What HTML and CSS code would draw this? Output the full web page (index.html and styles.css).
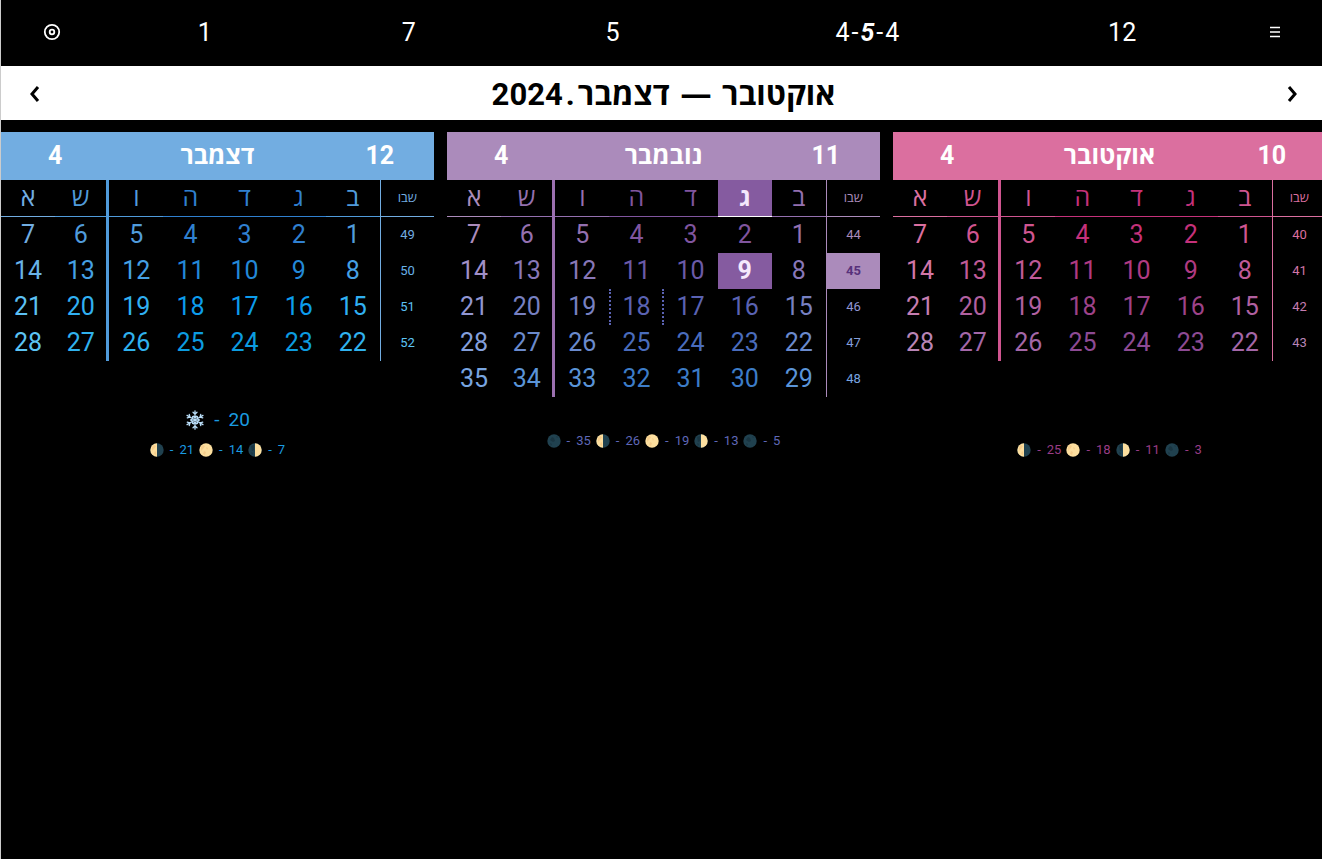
FILE: index.html
```
<!DOCTYPE html>
<html lang="he">
<head>
<meta charset="utf-8">
<title>אוקטובר — דצמבר.2024</title>
<link rel="stylesheet" href="styles.css">
</head>
<body>
<svg class="defs" aria-hidden="true">
  <symbol id="dark" viewBox="0 0 14 14"><circle cx="7" cy="7" r="6.7" fill="#20414f"/><path d="M5 3l2 1 1 3-2 1-3-2zM3 9l2 1-1 2zM9 2l2 1-1 1z" fill="#1a3541"/></symbol>
  <symbol id="full" viewBox="0 0 14 14"><circle cx="7" cy="7" r="6.7" fill="#fddf9f"/><path d="M2 4l2-2 2 1-2 3-2 2zM7 4l2 1-1 2zM5 8l2 1-1 3-2-1z" fill="#f6cd8c"/></symbol>
  <symbol id="first" viewBox="0 0 14 14"><circle cx="7" cy="7" r="6.7" fill="#20414f"/><path d="M3 3l3-1v5l-2 1zM3 9l2 1-1 2z" fill="#1a3541"/><path d="M7 .3a6.7 6.7 0 0 1 0 13.400z" fill="#fddf9f"/></symbol>
  <symbol id="last" viewBox="0 0 14 14"><circle cx="7" cy="7" r="6.7" fill="#20414f"/><path d="M7 .3a6.700 6.700 0 0 0 0 13.400z" fill="#fddf9f"/><path d="M2 4l2-2 2 1-2 3-2 2zM5 8l1 1v3l-2-1z" fill="#f6cd8c"/></symbol>
  <symbol id="snow" viewBox="0 0 20 20"><g fill="none" stroke="#b9ddf8" stroke-width="1.300" stroke-linecap="round"><path id="arm" d="M10 10V.8M8 2.200L10 4.200l2-2M8.300 6.200L10 7.800l1.700-1.600"/><use href="#arm" transform="rotate(60 10 10)"/><use href="#arm" transform="rotate(120 10 10)"/><use href="#arm" transform="rotate(180 10 10)"/><use href="#arm" transform="rotate(240 10 10)"/><use href="#arm" transform="rotate(300 10 10)"/></g></symbol>
</svg>
<div class="page">
  <nav class="menu">
    <button aria-label="היום"><svg class="target" viewBox="0 0 18 18"><circle cx="9" cy="9" r="7.200"/><circle cx="9" cy="9" r="2.300"/></svg></button>
    <button>1</button>
    <button>7</button>
    <button>5</button>
    <button><span class="pattern"><span>4</span><span>-</span><b><i>5</i></b><span>-</span><span>4</span></span></button>
    <button>12</button>
    <button aria-label="תפריט"><svg class="bars" viewBox="0 0 12 12"><path d="M1 1.500h10M1 6h10M1 10.500h10"/></svg></button>
  </nav>
  <header class="period">
    <button aria-label="הבא"><svg class="arrow" viewBox="0 0 10 16"><path d="M8 1L2 8l6 7"/></svg></button>
    <h1 dir="rtl">אוקטובר <span class="dash">—</span> דצמבר<span class="dot">.</span>2024</h1>
    <button aria-label="הקודם"><svg class="arrow" viewBox="0 0 10 16"><path d="M2 1l6 7-6 7"/></svg></button>
  </header>
  <main class="months" dir="rtl" id="months"></main>
</div>
<script src="calendar.js"></script>
</body>
</html>
```
FILE: styles.css
```
* { box-sizing: border-box; }
body {
  margin: 0;
  min-height: 100vh;
  background: #000;
  color: #fff;
  border-left: 1px solid #ccc;
  font-family: Roboto, "Open Sans", sans-serif;
  font-size: 25px;
  overflow: hidden;
}
.defs { position: absolute; width: 0; height: 0; }
.page { width: calc(100% + 4px); }
button {
  background: none;
  border: 0;
  padding: 0;
  color: inherit;
  font: inherit;
  cursor: pointer;
}
.menu {
  display: grid;
  grid-template-columns: 1fr 2fr 2fr 2fr 3fr 2fr 1fr;
  height: 66px;
  padding-bottom: 2px;
}
.menu svg, .arrow { display: block; margin: 0 auto; fill: none; stroke: currentColor; }
.pattern { display: flex; justify-content: center; gap: 2px; }
.target { width: 18px; height: 18px; stroke-width: 1.8; }
.bars { width: 12px; height: 12px; stroke-width: 1.7; }
.period {
  display: grid;
  grid-template-columns: 68px 1fr 68px;
  align-items: center;
  height: 54px;
  background: #fff;
  color: #000;
}
.period h1 { margin: 0; text-align: center; font-size: 31px; font-weight: 700; line-height: 54px; }
.dash { margin: 0 3px; font-family: "Open Sans", sans-serif; }
.dot { margin: 0 3px; }
.arrow { width: 10px; height: 16px; stroke-width: 3; }
.months {
  display: grid;
  grid-template-columns: repeat(3, 1fr);
  gap: 13px;
  padding-top: 12px;
}
.m10 { --main: #db6f9f; --mid: #d05590; }
.m11 { --main: #ab8bbb; --mid: #9b70b0; }
.m12 { --main: #72ade1; --mid: #509bdb; }
.month h2 {
  display: grid;
  grid-template-columns: 1fr 2fr 1fr;
  margin: 0;
  height: 48px;
  line-height: 48px;
  background: var(--main);
  color: #fff;
  text-align: center;
  font-size: 25px;
}
.days { width: 100%; table-layout: fixed; border-spacing: 0; }
.days th, .days td { height: 36px; padding: 0; line-height: 36px; text-align: center; font-weight: 400; color: var(--c); }
.days thead th { height: 37px; border-bottom: 1px solid var(--c); }
.days tr > :first-child { font-size: 13px; border-left: 1px solid var(--main); }
.days tr > :nth-child(7) { border-right: 3px solid var(--mid); }
.days .today { background: #855ba0; color: #f5e8fc; font-weight: 700; border-color: #fff; }
.days tr > .week-now { background: var(--main); color: #57317b; font-weight: 700; }
.days .event { border-left: 2px dotted var(--c); border-right: 2px dotted var(--c); }
.notes { direction: ltr; display: grid; justify-items: center; line-height: 30px; color: var(--note); }
.m10 .notes { padding-top: 74px; }
.m11 .notes { padding-top: 29px; }
.m12 .notes { padding-top: 44px; }
.note { display: flex; justify-content: center; gap: 5px; font-size: 13px; }
.item { display: flex; align-items: center; gap: 6px; }
.note svg { width: 14px; height: 14px; }
.season { font-size: 19px; }
.season .item { gap: 9px; }
.season svg { width: 20px; height: 20px; }
```
FILE: calendar.js
```
const months = [
  { n: 10, name: "אוקטובר", week: 40, note: "#993c85", rows: [
    ["#db6f9f", "#d05590", "#c5317a"], ["#db6f9f", "#d05590", "#c5317a"], ["#d276a8", "#c05a98", "#b03a82"],
    ["#c67db0", "#b160a0", "#9d4289"], ["#b985b6", "#a467a8", "#8d4a94"]],
    moons: [["last", 25], ["full", 18], ["first", 11], ["dark", 3]] },
  { n: 11, name: "נובמבר", week: 44, note: "#5f68b8", rows: [
    ["#ab8bbb", "#9470b0", "#80559f"], ["#ab8bbb", "#9470b0", "#80559f"], ["#a08fc8", "#8877b8", "#6b5aa8"],
    ["#9196d2", "#7780c2", "#5a62b2"], ["#849fdb", "#6a8acd", "#4a6cbc"], ["#78a5e0", "#5a94d8", "#3c7cc8"]],
    moons: [["dark", 35], ["last", 26], ["full", 19], ["first", 13], ["dark", 5]] },
  { n: 12, name: "דצמבר", week: 49, note: "#1a9be0", season: 20, rows: [
    ["#72ade1", "#509bdb", "#3080d0"], ["#72ade1", "#509bdb", "#3080d0"], ["#68b2e8", "#45a0e4", "#2388d8"],
    ["#5cc0f5", "#30b0f2", "#0c9cec"], ["#5cc4f4", "#30b2ee", "#0c9ce0"]],
    moons: [["last", 21], ["full", 14], ["first", 7]] }
];
const names = ["ב", "ג", "ד", "ה", "ו", "ש", "א"];
const shade = [1, 2, 2, 2, 1, 1, 0];
const icon = (id, n) => `<span class="item"><svg aria-hidden="true"><use href="#${id}"/></svg><span>-</span><span>${n}</span></span>`;

document.getElementById("months").innerHTML = months.map(m => {
  const style = (row, level) => `style="--c:${m.rows[row][level]}"`;
  const head = names.map((d, i) =>
    `<th scope="col" ${m.n === 11 && i === 1 ? 'class="today"' : ""} ${style(0, shade[i])}>${d}</th>`).join("");
  const body = m.rows.slice(1).map((_, r) => {
    const week = m.week + r;
    const cells = names.map((_, i) => {
      const day = r * 7 + i + 1;
      const cls = m.n !== 11 ? "" : day === 9 ? "today" : day === 18 ? "event" : "";
      return `<td class="${cls}" ${style(r + 1, shade[i])}>${day}</td>`;
    }).join("");
    return `<tr><th scope="row" class="${week === 45 ? "week-now" : ""}" ${style(r + 1, 0)}>${week}</th>${cells}</tr>`;
  }).join("");
  const season = m.season ? `<div class="note season">${icon("snow", m.season)}</div>` : "";
  return `<section class="month m${m.n}">
    <h2><span>${m.n}</span><span>${m.name}</span><span>4</span></h2>
    <table class="days"><thead><tr><th scope="col" ${style(0, 0)}>שבו</th>${head}</tr></thead><tbody>${body}</tbody></table>
    <div class="notes" style="--note:${m.note}">${season}<div class="note">${m.moons.map(x => icon(...x)).join("")}</div></div>
  </section>`;
}).join("");
```
